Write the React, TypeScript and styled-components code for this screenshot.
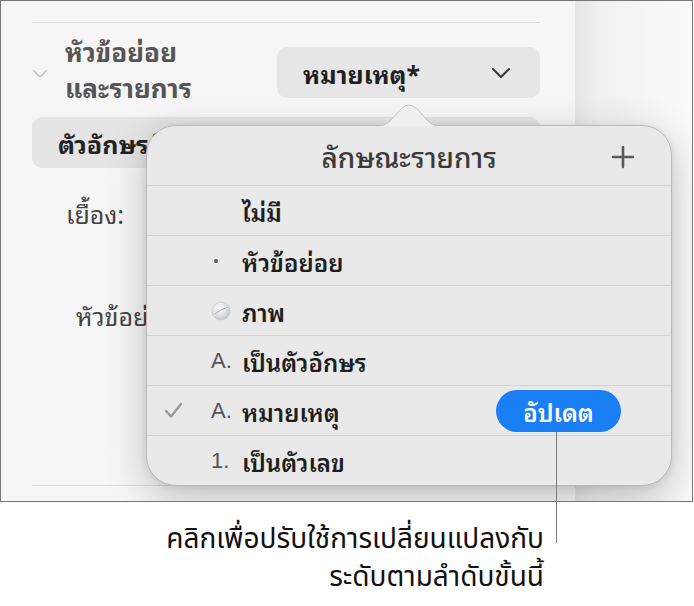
import styled, { createGlobalStyle } from "styled-components";

const uiFont = `"Noto Sans Thai Looped", "Noto Sans Thai", "Noto Sans", "DejaVu Sans", sans-serif`;
const captionFont = `"Noto Sans Thai", "Noto Sans", "DejaVu Sans", sans-serif`;

type Marker = "none" | "bullet" | "image" | "letter" | "number";

type ListStyle = {
  label: string;
  marker: Marker;
  checked?: boolean;
  update?: boolean;
};

const listStyles: ListStyle[] = [
  { label: "ไม่มี", marker: "none" },
  { label: "หัวข้อย่อย", marker: "bullet" },
  { label: "ภาพ", marker: "image" },
  { label: "เป็นตัวอักษร", marker: "letter" },
  { label: "หมายเหตุ", marker: "letter", checked: true, update: true },
  { label: "เป็นตัวเลข", marker: "number" },
];

function Chevron({ color, size }: { color: string; size: number }) {
  return (
    <svg width={size} height={size * 0.6} viewBox="0 0 20 12">
      <path
        d="M2 2 L10 10 L18 2"
        fill="none"
        stroke={color}
        strokeWidth="2"
        strokeLinecap="round"
        strokeLinejoin="round"
      />
    </svg>
  );
}

function PlusIcon() {
  return (
    <svg width="24" height="24" viewBox="0 0 24 24">
      <path d="M12 2 V22 M2 12 H22" stroke="#5a5a5a" strokeWidth="2.6" strokeLinecap="round" />
    </svg>
  );
}

function CheckIcon() {
  return (
    <svg width="19" height="17" viewBox="0 0 19 17">
      <path
        d="M2 9 L7 14.5 L17 2"
        fill="none"
        stroke="#9a9a9a"
        strokeWidth="2.4"
        strokeLinecap="round"
        strokeLinejoin="round"
      />
    </svg>
  );
}

function ImageBullet() {
  return (
    <svg width="20" height="20" viewBox="0 0 19 19">
      <defs>
        <radialGradient id="disc" cx="40%" cy="35%" r="70%">
          <stop offset="0" stopColor="#fbfbfd" />
          <stop offset="0.6" stopColor="#dfe1e6" />
          <stop offset="1" stopColor="#b9bcc3" />
        </radialGradient>
      </defs>
      <circle cx="9.5" cy="9.5" r="8.5" fill="url(#disc)" stroke="#c2c4c9" strokeWidth="0.6" />
      <path d="M3.5 12.5 Q9 8 15.5 6" fill="none" stroke="#9fa3aa" strokeWidth="0.9" />
    </svg>
  );
}

function MarkerGlyph({ marker }: { marker: Marker }) {
  switch (marker) {
    case "bullet":
      return <Dot />;
    case "image":
      return <ImageBullet />;
    case "letter":
      return <MarkerText>A.</MarkerText>;
    case "number":
      return <MarkerText>1.</MarkerText>;
    default:
      return null;
  }
}

function App(): JSX.Element {
  return (
    <>
      <GlobalStyle />
      <Page>
        <Frame>
          <Sidebar>
            <Divider />
            <SectionHeader>
              <Disclosure>
                <Chevron color="#c2c2c2" size={16} />
              </Disclosure>
              <SectionTitle>
                <TitleLine>หัวข้อย่อย</TitleLine>
                <TitleLine>และรายการ</TitleLine>
              </SectionTitle>
              <PopupButton>
                <span>หมายเหตุ*</span>
                <Chevron color="#3a3a3a" size={20} />
              </PopupButton>
            </SectionHeader>
            <Segment>
              <SegmentItem>ตัวอักษรสัญลักษณ์</SegmentItem>
            </Segment>
            <FieldRow $height={90}>
              <FieldLabel $indent={34}>เยื้อง:</FieldLabel>
            </FieldRow>
            <FieldRow $height={114}>
              <FieldLabel $indent={44}>หัวข้อย่อย:</FieldLabel>
            </FieldRow>
            <Spacer />
            <Divider />
          </Sidebar>
          <WindowEdge />

          <Popover>
            <Arrow width="60" height="22" viewBox="0 0 60 22">
              <path
                d="M0 22 C14 22 19 1 30 1 C41 1 46 22 60 22"
                fill="#efefef"
                stroke="#c3c3c3"
                strokeWidth="1"
              />
            </Arrow>
            <PopoverHeader>
              <PopoverTitle>ลักษณะรายการ</PopoverTitle>
              <AddButton>
                <PlusIcon />
              </AddButton>
            </PopoverHeader>
            {listStyles.map((item) => (
              <StyleRow key={item.label}>
                <CheckCell>{item.checked && <CheckIcon />}</CheckCell>
                <MarkerCell>
                  <MarkerGlyph marker={item.marker} />
                </MarkerCell>
                <StyleLabel>{item.label}</StyleLabel>
                {item.update && <UpdateButton>อัปเดต</UpdateButton>}
              </StyleRow>
            ))}
          </Popover>
        </Frame>

        <CalloutLine />
        <Caption>
          <CaptionLine>คลิกเพื่อปรับใช้การเปลี่ยนแปลงกับ</CaptionLine>
          <CaptionLine>ระดับตามลำดับขั้นนี้</CaptionLine>
        </Caption>
      </Page>
    </>
  );
}
export default App;

const GlobalStyle = createGlobalStyle`
  html, body {
    margin: 0;
    padding: 0;
    background: #ffffff;
  }
  body {
    font-family: ${uiFont};
  }
`;

const Page = styled.div`
  position: relative;
  width: 694px;
  height: 606px;
  overflow: hidden;
`;

const Frame = styled.div`
  position: relative;
  box-sizing: border-box;
  display: flex;
  width: 693px;
  height: 502px;
  border: 1px solid #777777;
  overflow: hidden;
`;

const Sidebar = styled.div`
  box-sizing: border-box;
  display: flex;
  flex-direction: column;
  width: 574px;
  padding: 21px 35px 15px 31px;
  background: #f6f6f6;
`;

const WindowEdge = styled.div`
  flex: 1;
  background: linear-gradient(to right, #e6e6e6 0, #f0f0f0 24px, #fafafa 100%);
`;

const Divider = styled.div`
  flex-shrink: 0;
  height: 1px;
  background: #dedede;
`;

const Spacer = styled.div`
  flex: 1;
`;

/* fixed height: the two-line title spills above and below the popup button */
const SectionHeader = styled.div`
  display: flex;
  align-items: center;
  flex-shrink: 0;
  height: 51px;
  margin-top: 24px;
`;

const Disclosure = styled.div`
  display: flex;
  width: 33px;
  padding-top: 2px;
`;

const SectionTitle = styled.div`
  display: flex;
  flex-direction: column;
  gap: 0;
  margin-top: -10px;
  font-size: 26px;
  font-weight: 700;
  color: #555555;
  white-space: nowrap;
`;

const TitleLine = styled.div`
  height: 36px;
  line-height: 36px;
`;

const PopupButton = styled.div`
  box-sizing: border-box;
  display: flex;
  align-items: center;
  justify-content: space-between;
  width: 263px;
  height: 51px;
  margin-left: auto;
  padding: 0 29px 0 26px;
  border-radius: 10px;
  background: #e6e6e6;
  font-size: 25px;
  font-weight: 700;
  color: #1f1f1f;
`;

const Segment = styled.div`
  display: flex;
  flex-shrink: 0;
  height: 51px;
  margin-top: 19px;
  border-radius: 10px;
  background: #e4e4e4;
`;

const SegmentItem = styled.div`
  display: flex;
  align-items: center;
  padding-left: 26px;
  font-size: 25px;
  font-weight: 700;
  color: #222222;
  white-space: nowrap;
`;

const FieldRow = styled.div<{ $height: number }>`
  display: flex;
  align-items: center;
  flex-shrink: 0;
  height: ${(p) => p.$height}px;
`;

const FieldLabel = styled.div<{ $indent: number }>`
  margin-left: ${(p) => p.$indent}px;
  font-size: 25px;
  color: #444444;
  white-space: nowrap;
`;

const Popover = styled.div`
  position: absolute;
  left: 145px;
  top: 124px;
  box-sizing: border-box;
  width: 526px;
  height: 361px;
  border: 1px solid #b9b9b9;
  border-radius: 30px;
  background: #e9e9e9;
  box-shadow: 0 12px 40px rgba(0, 0, 0, 0.22), 0 2px 8px rgba(0, 0, 0, 0.08);
`;

const Arrow = styled.svg`
  position: absolute;
  left: 232px;
  top: -22px;
`;

const PopoverHeader = styled.div`
  position: relative;
  display: flex;
  align-items: center;
  justify-content: center;
  height: 59px;
  border-bottom: 1px solid #d2d2d2;
`;

const PopoverTitle = styled.div`
  font-size: 28px;
  font-weight: 500;
  color: #3a3a3a;
`;

const AddButton = styled.div`
  position: absolute;
  right: 36px;
  top: 19px;
  display: flex;
`;

const StyleRow = styled.div`
  display: flex;
  align-items: center;
  height: 49px;
  padding-left: 17px;
  padding-right: 50px;
  & + & {
    border-top: 1px solid #d2d2d2;
  }
`;

const CheckCell = styled.div`
  display: flex;
  width: 47px;
`;

const MarkerCell = styled.div`
  display: flex;
  align-items: center;
  width: 31px;
`;

const MarkerText = styled.span`
  font-family: "Liberation Sans", Arial, sans-serif;
  font-size: 22px;
  color: #555555;
`;

const Dot = styled.span`
  width: 4px;
  height: 4px;
  margin-left: 3px;
  border-radius: 50%;
  background: #555555;
`;

const StyleLabel = styled.div`
  flex: 1;
  font-size: 24px;
  font-weight: 600;
  color: #1d1d1d;
`;

const UpdateButton = styled.div`
  display: flex;
  align-items: center;
  justify-content: center;
  width: 125px;
  height: 42px;
  border-radius: 21px;
  background: #1a7ef5;
  font-size: 24px;
  font-weight: 600;
  color: #ffffff;
`;

const CalloutLine = styled.div`
  position: absolute;
  left: 556px;
  top: 432px;
  width: 1px;
  height: 111px;
  background: #7a7a7a;
`;

const Caption = styled.div`
  display: flex;
  flex-direction: column;
  align-items: flex-end;
  width: 544px;
  margin-top: 19px;
  font-family: ${captionFont};
  font-size: 28px;
  color: #111111;
`;

const CaptionLine = styled.div`
  height: 38px;
  line-height: 38px;
`;
